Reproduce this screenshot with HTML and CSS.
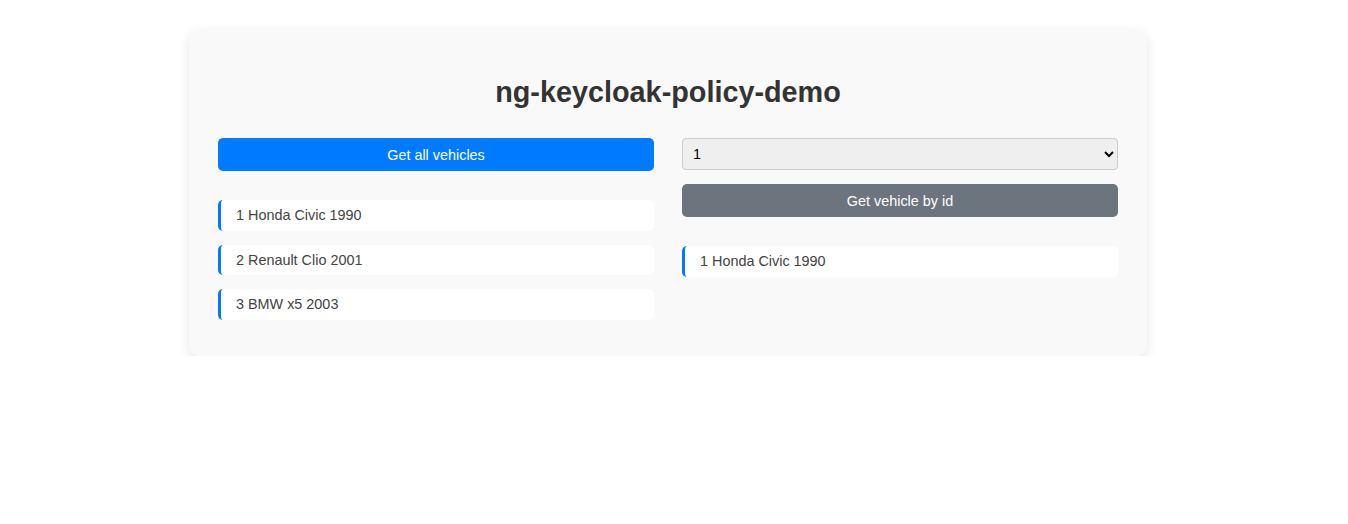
FILE: index.html
```html
<!DOCTYPE html>
<html lang="en">
<head>
<meta charset="utf-8">
<title>ng-keycloak-policy-demo</title>
<link rel="stylesheet" href="styles.css">
</head>
<body>
<div class="page">
  <div class="card">
    <h1 class="title">ng-keycloak-policy-demo</h1>
    <div class="columns">
      <div class="column">
        <button class="btn btn-primary">Get all vehicles</button>
        <ul class="list">
          <li class="item">1 Honda Civic 1990</li>
          <li class="item">2 Renault Clio 2001</li>
          <li class="item">3 BMW x5 2003</li>
        </ul>
      </div>
      <div class="column">
        <select class="select">
          <option>1</option>
          <option>2</option>
          <option>3</option>
        </select>
        <button class="btn btn-secondary">Get vehicle by id</button>
        <ul class="list">
          <li class="item">1 Honda Civic 1990</li>
        </ul>
      </div>
    </div>
  </div>
</div>
</body>
</html>
```

FILE: styles.css
```css
html, body {
  margin: 0;
  padding: 0;
  background: #ffffff;
  font-family: "Liberation Sans", Arial, sans-serif;
  color: #333333;
}

.page {
  display: flex;
  justify-content: center;
  padding: 29px 12px 0 0;
}

.card {
  box-sizing: border-box;
  width: 958px;
  padding: 17px 29px 36px;
  background: #f9f9f9;
  border-radius: 10px;
  box-shadow: 0 4px 12px rgba(0, 0, 0, 0.1);
}

.title {
  margin: 30px 0 29px;
  font-size: 28.8px;
  line-height: 33px;
  font-weight: 700;
  text-align: center;
  color: #333333;
}

.columns {
  display: grid;
  grid-template-columns: 1fr 1fr;
  column-gap: 28px;
}

.column {
  display: flex;
  flex-direction: column;
}

.btn {
  display: block;
  width: 100%;
  height: 33px;
  border: none;
  border-radius: 5px;
  font-family: "Liberation Sans", Arial, sans-serif;
  font-size: 14.4px;
  color: #ffffff;
  cursor: pointer;
}

.btn-primary {
  background: #007bff;
}

.btn-secondary {
  background: #6c757d;
  margin-top: 14px;
}

.select {
  box-sizing: border-box;
  width: 100%;
  height: 32px;
  padding: 0 6px;
  border: 1px solid #cccccc;
  border-radius: 4px;
  background-color: #efefef;
  font-family: "Liberation Sans", Arial, sans-serif;
  font-size: 14.4px;
  color: #000000;
}

.list {
  list-style: none;
  margin: 29px 0 0;
  padding: 0;
  display: flex;
  flex-direction: column;
  gap: 14px;
}

.item {
  box-sizing: border-box;
  height: 30.5px;
  display: flex;
  align-items: center;
  padding: 0 15px;
  background: #ffffff;
  border-left: 3px solid #007bff;
  border-radius: 5px;
  font-size: 14.4px;
  color: #444444;
}
```
